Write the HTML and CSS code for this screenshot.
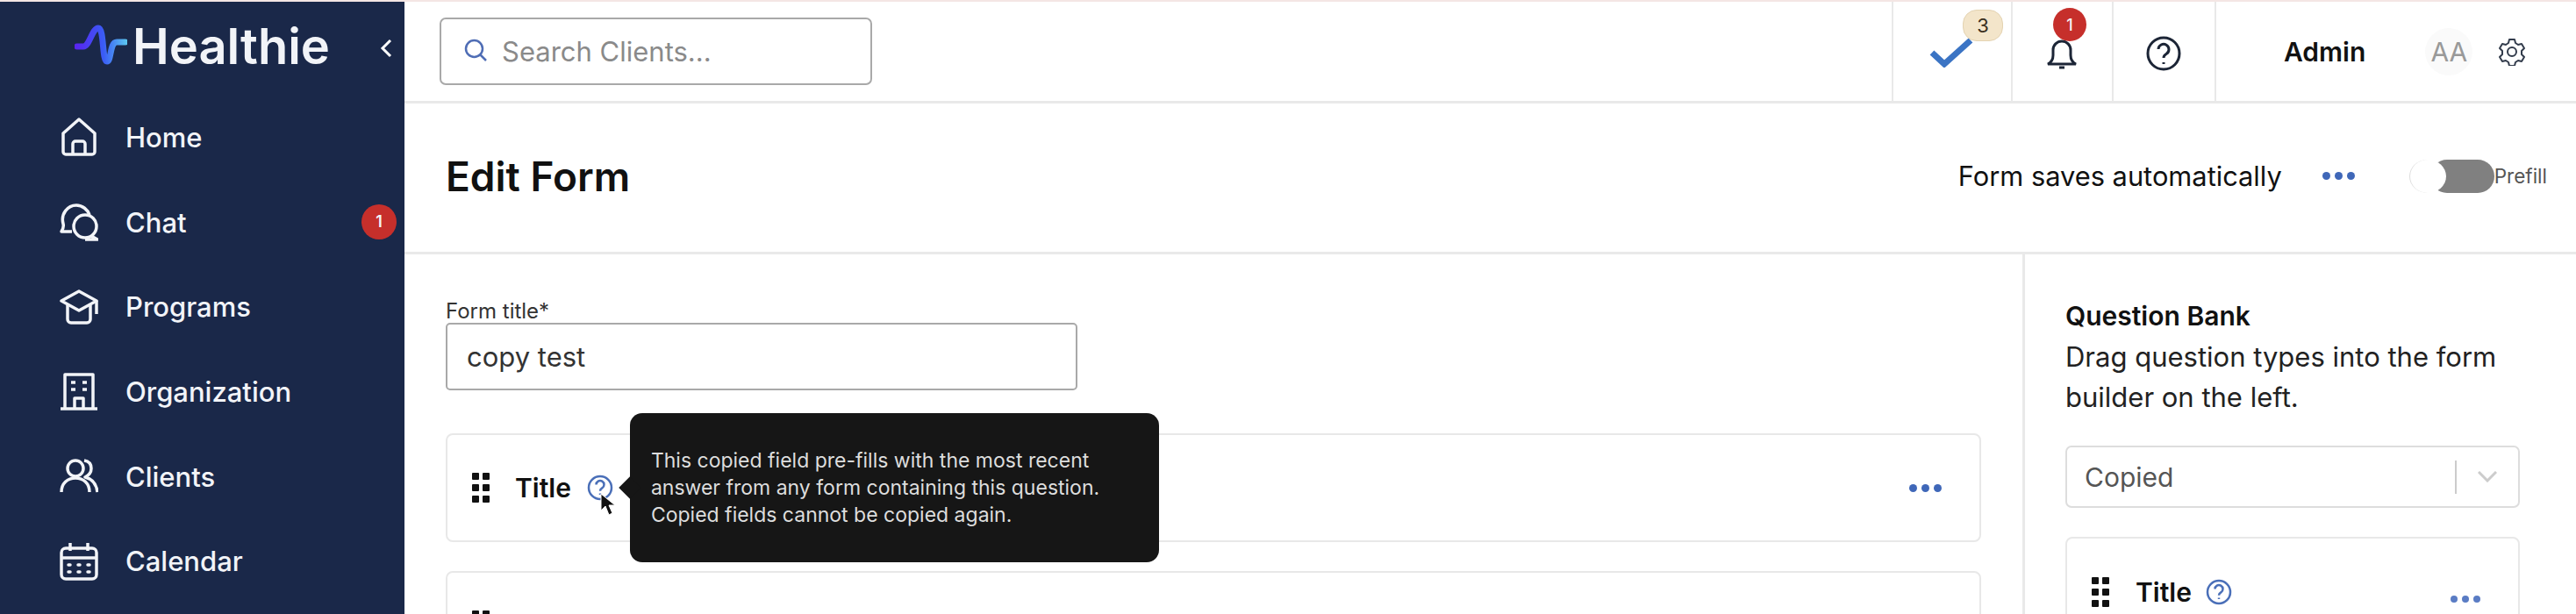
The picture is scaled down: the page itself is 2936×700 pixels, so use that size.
FILE: index.html
```html
<!DOCTYPE html>
<html lang="en">
<head>
    <meta charset="utf-8">
    <link rel="stylesheet" href="styles.css">
    <title>Edit Form</title>
</head>
<body>
<div class="app">
    <!-- sidebar -->
    <aside class="sidebar">
        <div class="brand">
            <svg class="brand-mark" viewBox="0 0 60 46" fill="none">
                <defs>
                    <linearGradient id="markGradient" x1="0" y1="0" x2="60" y2="0" gradientUnits="userSpaceOnUse">
                        <stop offset="0" stop-color="#5a22f0"/>
                        <stop offset="0.55" stop-color="#3a5cf5"/>
                        <stop offset="1" stop-color="#5cc8f0"/>
                    </linearGradient>
                </defs>
                <path d="M3 25H10C17 25 20 4 27 4C34 4 31 42 37 42C42 42 40 20 48 20H58" stroke="url(#markGradient)" stroke-width="7" stroke-linecap="round" stroke-linejoin="round"/>
            </svg>
            <span class="brand-name">Healthie</span>
            <svg class="collapse" viewBox="0 0 14 22" fill="none"><path d="M12 2L3 11L12 20" stroke="#fff" stroke-width="3"/></svg>
        </div>
        <nav class="nav">
            <a class="nav-item">
                <svg class="nav-icon" viewBox="0 0 44 44" fill="none"><path d="M4 18L22 2L40 18V39a3 3 0 0 1-3 3H7a3 3 0 0 1-3-3Z"/><path d="M15 42V30a3 3 0 0 1 3-3h8a3 3 0 0 1 3 3v12"/></svg>
                Home
            </a>
            <a class="nav-item">
                <svg class="nav-icon" viewBox="0 0 44 44" fill="none"><path d="M14 33H2C4 30 5 28 4 24C1 13 9 3 19 3C26 3 32 8 34 14"/><circle cx="29" cy="27" r="13"/><path d="M36 38L43 42H29"/></svg>
                Chat
                <span class="nav-badge">1</span>
            </a>
            <a class="nav-item">
                <svg class="nav-icon" viewBox="0 0 44 44" fill="none"><path d="M22 4L42 15L22 26L2 15Z"/><path d="M9 20V36a4 4 0 0 0 4 4H31a4 4 0 0 0 4-4V20"/><path d="M42 15V30"/></svg>
                Programs
            </a>
            <a class="nav-item">
                <svg class="nav-icon" viewBox="0 0 44 44" fill="none"><path d="M6 42V3H38V42"/><path d="M1 42H43"/><path d="M13 12h5M26 12h5M13 20h5M26 20h5"/><path d="M17 42V30H27V42"/></svg>
                Organization
            </a>
            <a class="nav-item">
                <svg class="nav-icon" viewBox="0 0 44 44" fill="none"><circle cx="18" cy="13" r="9"/><path d="M2 40C2 30 9 24 18 24C27 24 34 30 34 40"/><path d="M28 4C34 5 36 9 36 13C36 17 33 21 29 23C37 25 42 31 43 40"/></svg>
                Clients
            </a>
            <a class="nav-item">
                <svg class="nav-icon" viewBox="0 0 44 44" fill="none"><rect x="2" y="7" width="40" height="35" rx="5"/><path d="M2 18H42M12 1V10M32 1V10"/><path class="nav-dots" d="M10 26h2M21 26h2M32 26h2M10 34h2M21 34h2M32 34h2"/></svg>
                Calendar
            </a>
        </nav>
    </aside>

    <div class="main">
        <!-- top bar -->
        <header class="topbar">
            <div class="search">
                <svg class="search-icon" viewBox="0 0 26 26" fill="none"><circle cx="11.5" cy="11.5" r="9.5"/><path d="M18.5 18.5L25 25"/></svg>
                <span>Search Clients...</span>
            </div>
            <div class="top-cell top-tasks">
                <svg class="check-icon" viewBox="0 0 50 34" fill="none"><path d="M3 17L17 30L47 3"/></svg>
                <span class="task-count">3</span>
            </div>
            <div class="top-cell top-bell">
                <svg class="bell-icon" viewBox="0 0 36 34" fill="none"><path d="M2 28c4-2 6-5 6-10V12a10 10 0 0 1 20 0v6c0 5 2 8 6 10Z"/><path d="M15 32H21"/></svg>
                <span class="bell-count">1</span>
            </div>
            <div class="top-cell top-help">
                <svg class="help-icon" viewBox="0 0 40 40" fill="none"><circle cx="20" cy="20" r="18"/><path d="M14 15a6 6 0 1 1 9 5.500c-2 1.200-3 2.500-3 4.500"/><path d="M20 30v2"/></svg>
            </div>
            <div class="account">
                <span class="account-name">Admin</span>
                <span class="avatar">AA</span>
                <svg class="gear-icon" viewBox="0 0 32 32" fill="none"><path d="M13 2h6l1 4 3 2 4-1 3 5-3 3v4l3 3-3 5-4-1-3 2-1 4h-6l-1-4-3-2-4 1-3-5 3-3v-4L2 12l3-5 4 1 3-2Z"/><circle cx="16" cy="16" r="5"/></svg>
            </div>
        </header>

        <!-- page title -->
        <div class="page-head">
            <h1>Edit Form</h1>
            <div class="page-actions">
                <span class="autosave">Form saves automatically</span>
                <span class="dots"><i></i><i></i><i></i></span>
                <span class="toggle"><span class="toggle-thumb"></span></span>
                <span class="toggle-label">Prefill</span>
            </div>
        </div>

        <div class="content">
            <section class="form-area">
                <label class="form-label">Form title*</label>
                <div class="text-input">copy test</div>

                <div class="card">
                    <span class="grip"><i></i><i></i><i></i><i></i><i></i><i></i></span>
                    <span class="card-title">Title</span>
                    <span class="hint">
                        <svg class="hint-icon" viewBox="0 0 30 30" fill="none"><circle cx="15" cy="15" r="13"/><path d="M10.500 11.500a4.500 4.500 0 1 1 6.800 3.900c-1.500.9-2.300 1.800-2.300 3.300"/><path d="M15 21.500v1.500"/></svg>
                        <svg class="cursor" viewBox="0 0 18 26"><path d="M1 1V20L6 15L10 25L14 23L10 14H17Z" fill="#111" stroke="#fff" stroke-width="1"/></svg>
                        <span class="tooltip">
                            This copied field pre-fills with the most recent<br>
                            answer from any form containing this question.<br>
                            Copied fields cannot be copied again.
                        </span>
                    </span>
                    <span class="dots card-dots"><i></i><i></i><i></i></span>
                </div>
                <div class="card">
                    <span class="grip"><i></i><i></i><i></i><i></i><i></i><i></i></span>
                </div>
            </section>

            <section class="bank">
                <h3>Question Bank</h3>
                <p>Drag question types into the form builder on the left.</p>
                <div class="select">
                    <span class="select-value">Copied</span>
                    <span class="select-sep"></span>
                    <svg class="select-arrow" viewBox="0 0 22 13" fill="none"><path d="M1 1L11 11L21 1"/></svg>
                </div>
                <div class="bank-card">
                    <span class="grip"><i></i><i></i><i></i><i></i><i></i><i></i></span>
                    <span class="card-title">Title</span>
                    <svg class="hint-icon" viewBox="0 0 30 30" fill="none"><circle cx="15" cy="15" r="13"/><path d="M10.500 11.500a4.500 4.500 0 1 1 6.800 3.900c-1.500.9-2.300 1.800-2.300 3.300"/><path d="M15 21.500v1.500"/></svg>
                    <span class="dots card-dots"><i></i><i></i><i></i></span>
                </div>
            </section>
        </div>
    </div>
</div>
</body>
</html>
```

FILE: styles.css
```css
* {
  box-sizing: border-box;
}

html,
body {
  margin: 0;
  height: 100%;
  overflow: hidden;
  background-color: #ffffff;
  font-family: "Inter", "Liberation Sans", sans-serif;
  color: #111111;
}

.app {
  display: flex;
  height: 700px;
  border-top: 2px solid #f4e6e4;
}

/* sidebar */
.sidebar {
  flex: 0 0 461px;
  background-color: #1a2849;
  color: #f2f4f8;
}

.brand {
  display: flex;
  align-items: center;
  height: 106px;
  padding: 0 14px 0 85px;
}

.brand-mark {
  width: 60px;
  height: 46px;
  margin: -8px 6px 0 0;
}

.brand-name {
  flex: 1;
  font-size: 56px;
  font-weight: 600;
  margin-top: -4px;
}

.collapse {
  width: 14px;
  height: 22px;
}

.nav-item {
  display: flex;
  align-items: center;
  gap: 31px;
  height: 96.7px;
  padding-left: 68px;
  position: relative;
  font-size: 31px;
  font-weight: 500;
}

.nav-icon {
  width: 44px;
  height: 44px;
  stroke: #f2f4f8;
  stroke-width: 3.5;
  stroke-linejoin: round;
}

.nav-icon .nav-dots {
  stroke-linecap: round;
}

.nav-badge {
  position: absolute;
  right: 9px;
  top: 28px;
  width: 40px;
  height: 40px;
  border-radius: 50%;
  background-color: #c62f2b;
  display: flex;
  align-items: center;
  justify-content: center;
  font-size: 18px;
  font-weight: 600;
}

/* top bar */
.main {
  flex: 1;
  min-width: 0;
}

.topbar {
  display: flex;
  height: 116px;
  border-bottom: 3px solid #e9e9e9;
}

.search {
  width: 493px;
  height: 77px;
  margin: 18px 0 0 40px;
  padding-left: 26px;
  display: flex;
  align-items: center;
  gap: 17px;
  border: 2px solid #a9a9a9;
  border-radius: 7px;
  color: #8a8a8a;
  font-size: 31px;
}

.search-icon {
  width: 26px;
  height: 26px;
  margin-top: -4px;
  stroke: #4f6db5;
  stroke-width: 2.500;
}

.top-cell {
  position: relative;
  border-left: 2px solid #e9e9e9;
}

.top-tasks {
  flex: 0 0 136px;
  margin-left: auto;
}

.top-bell {
  flex: 0 0 115px;
}

.top-help {
  flex: 0 0 117px;
}

.check-icon {
  position: absolute;
  left: 41px;
  top: 41px;
  width: 50px;
  height: 34px;
  stroke: #3b74c4;
  stroke-width: 7;
}

.task-count {
  position: absolute;
  left: 79px;
  top: 9px;
  width: 46px;
  height: 36px;
  border-radius: 16px;
  border: 1px solid #e4d3b2;
  background-color: #f3e5ca;
  display: flex;
  align-items: center;
  justify-content: center;
  font-size: 22px;
  color: #3a3020;
}

.bell-icon {
  position: absolute;
  left: 38px;
  top: 43px;
  width: 36px;
  height: 34px;
  stroke: #1c2536;
  stroke-width: 3;
}

.bell-count {
  position: absolute;
  left: 46px;
  top: 7px;
  width: 38px;
  height: 38px;
  border-radius: 50%;
  background-color: #c62f2b;
  color: #f5f5f5;
  display: flex;
  align-items: center;
  justify-content: center;
  font-size: 18px;
  font-weight: 500;
}

.help-icon {
  position: absolute;
  left: 37px;
  top: 39px;
  width: 40px;
  height: 40px;
  stroke: #1c2536;
  stroke-width: 3;
}

.account {
  flex: 0 0 412px;
  display: flex;
  align-items: center;
  border-left: 2px solid #e9e9e9;
  padding-left: 77px;
}

.account-name {
  font-size: 30px;
  font-weight: 600;
}

.avatar {
  margin-left: 68px;
  width: 54px;
  height: 54px;
  border-radius: 50%;
  background-color: #fafafa;
  color: #999999;
  font-size: 30px;
  display: flex;
  align-items: center;
  justify-content: center;
}

.gear-icon {
  width: 32px;
  height: 32px;
  margin-left: 29px;
  stroke: #333c4c;
  stroke-width: 2;
  stroke-linejoin: round;
}

/* page title */
.page-head {
  display: flex;
  align-items: center;
  justify-content: space-between;
  height: 172px;
  padding: 0 33px 4px 47px;
  border-bottom: 3px solid #e9e9e9;
}

.page-head h1 {
  margin: 0;
  font-size: 46px;
  font-weight: 600;
}

.page-actions {
  display: flex;
  align-items: center;
}

.autosave {
  font-size: 30.8px;
}

.dots {
  display: flex;
  gap: 5px;
}

.dots i {
  width: 9px;
  height: 9px;
  border-radius: 50%;
  background-color: #3f67b8;
}

.page-actions .dots {
  margin-left: 46px;
}

.toggle {
  position: relative;
  width: 97px;
  height: 38px;
  margin-left: 62px;
}

.toggle::before {
  content: "";
  position: absolute;
  left: 24px;
  right: 0;
  top: 0;
  bottom: 0;
  border-radius: 19px;
  background-color: #808080;
}

.toggle-thumb {
  position: absolute;
  left: 0;
  top: 0;
  width: 42px;
  height: 38px;
  border-radius: 50%;
  background-color: #ffffff;
  border-left: 1px solid #dddddd;
}

.toggle-label {
  font-size: 22.5px;
  color: #555555;
}

/* form */
.content {
  display: flex;
  height: 410px;
  overflow: hidden;
}

.form-area {
  flex: 1;
  padding: 52px 47px 0 47px;
}

.form-label {
  display: block;
  font-size: 24px;
  line-height: 26px;
  color: #333333;
}

.text-input {
  width: 720px;
  height: 77px;
  padding-left: 22px;
  display: flex;
  align-items: center;
  border: 2px solid #a9a9a9;
  border-radius: 5px;
  font-size: 31px;
  color: #333333;
}

.card {
  display: flex;
  align-items: center;
  height: 124px;
  margin-top: 49px;
  padding: 0 28px;
  border: 2px solid #e8e8e8;
  border-radius: 8px;
}

.card + .card {
  margin-top: 33px;
}

.grip {
  display: grid;
  grid-template-columns: 8px 8px;
  gap: 5px 4px;
  flex: none;
}

.grip i {
  height: 8px;
  background-color: #111111;
  border-radius: 1px;
}

.card-title {
  margin-left: 29px;
  font-size: 30px;
  font-weight: 600;
}

.hint {
  position: relative;
  display: flex;
  margin-left: 18px;
}

.hint-icon {
  width: 30px;
  height: 30px;
  stroke: #4a6fb8;
  stroke-width: 2.500;
}

.cursor {
  position: absolute;
  left: 15px;
  top: 21px;
  width: 18px;
  height: 26px;
}

.tooltip {
  position: absolute;
  left: 49px;
  top: -70px;
  width: 603px;
  height: 170px;
  padding: 0 0 0 24px;
  display: flex;
  flex-direction: column;
  justify-content: center;
  background-color: #161616;
  border-radius: 14px;
  color: #dddddd;
  font-size: 23px;
  line-height: 31px;
  white-space: nowrap;
}

.tooltip::before {
  content: "";
  position: absolute;
  left: -9px;
  top: 76px;
  width: 18px;
  height: 18px;
  background-color: #161616;
  transform: rotate(45deg);
}

.card-dots {
  margin-left: auto;
  margin-right: 15px;
}

/* question bank */
.bank {
  flex: 0 0 631px;
  padding: 46px 64px 0 46px;
  border-left: 3px solid #e9e9e9;
}

.bank h3 {
  margin: 0;
  font-size: 30px;
  line-height: 48px;
  font-weight: 600;
}

.bank p {
  margin: 0;
  font-size: 31px;
  line-height: 46px;
  color: #222222;
}

.select {
  display: flex;
  align-items: center;
  height: 71px;
  margin-top: 32px;
  padding: 0 24px 0 20px;
  border: 2px solid #dddddd;
  border-radius: 7px;
}

.select-value {
  flex: 1;
  font-size: 30px;
  color: #555555;
}

.select-sep {
  width: 2px;
  height: 38px;
  background-color: #cccccc;
  margin-right: 24px;
}

.select-arrow {
  width: 22px;
  height: 13px;
  stroke: #cccccc;
  stroke-width: 3;
}

.bank-card {
  display: flex;
  align-items: center;
  height: 160px;
  margin-top: 33px;
  padding: 0 0 34px 28px;
  border: 2px solid #e8e8e8;
  border-radius: 8px;
}

.bank-card .card-title {
  margin-left: 30px;
}

.bank-card .hint-icon {
  margin-left: 16px;
}

.bank-card .card-dots {
  margin-right: 43px;
  margin-top: 16px;
}

.bank-card .card-dots i {
  width: 8px;
  height: 8px;
  background-color: #5a7cc4;
}
```
